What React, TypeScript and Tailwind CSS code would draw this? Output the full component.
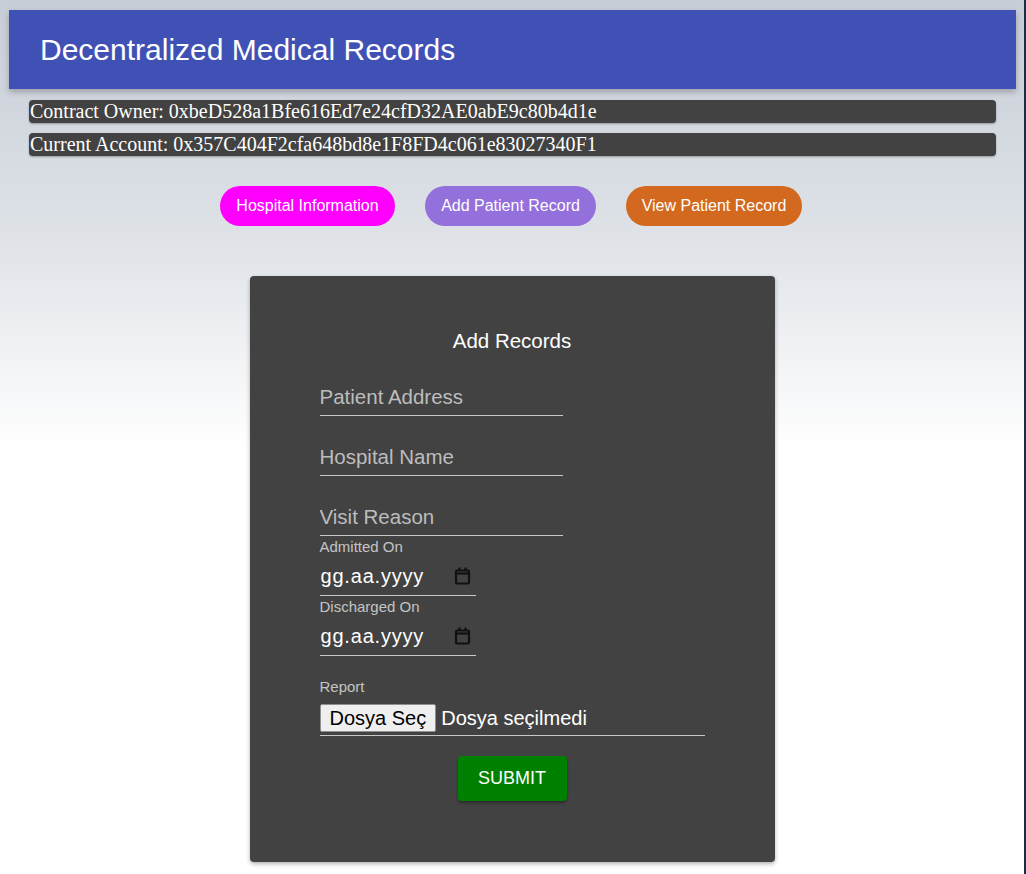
import React from 'react';

const owner = '0xbeD528a1Bfe616Ed7e24cfD32AE0abE9c80b4d1e';
const account = '0x357C404F2cfa648bd8e1F8FD4c061e83027340F1';

function CalendarIcon() {
  return (
    <svg width="17" height="18" viewBox="0 0 17 18" fill="none" stroke="#111" strokeWidth="2.2">
      <rect x="2" y="3.5" width="13" height="13" rx="1" />
      <path d="M2 6.5h13" />
      <path d="M5.5 0.5v3.5M11.5 0.5v3.5" />
    </svg>
  );
}

function TextField({ placeholder }: { placeholder: string }) {
  return (
    <input
      placeholder={placeholder}
      className="mt-5 h-10 w-[243px] bg-transparent pt-[2px] border-b border-[#c8c8c8] text-[20.5px] text-white placeholder:text-[#bdbdbd] outline-none"
    />
  );
}

function DateField({ label }: { label: string }) {
  return (
    <div className="flex flex-col">
      <span className="h-[18px] text-[15px] leading-[18px] text-[#c4c4c4]">{label}</span>
      <div className="flex h-10 w-[156px] items-center justify-between border-b border-[#c8c8c8] pr-[5px]">
        <span className="pl-[1px] text-[20px] tracking-[0.8px] text-white">gg.aa.yyyy</span>
        <CalendarIcon />
      </div>
    </div>
  );
}

export default function App() {
  return (
    <div
      className="min-h-[874px] w-full border-r-2 border-[#1b2d45] bg-[linear-gradient(to_bottom,#c7cdd7_0px,#dfe3e8_240px,#ffffff_450px,#ffffff_100%)] pt-[10px]"
      style={{ fontFamily: '"Liberation Sans", Arial, sans-serif' }}
    >
      {/* Header */}
      <header className="ml-[9px] mr-[8px] flex h-[79px] items-center bg-[#3f51b5] px-[31px] shadow-[0_3px_6px_rgba(0,0,0,0.25)]">
        <h1 className="text-[30px] text-white">Decentralized Medical Records</h1>
      </header>

      {/* Accounts */}
      <div
        className="ml-[29px] mr-[28px] mt-[11px] flex flex-col gap-[10px]"
        style={{ fontFamily: '"Liberation Serif", "Times New Roman", serif' }}
      >
        <div className="h-[23px] rounded-[4px] bg-[#424242] pl-[1px] text-[20px] leading-[23px] text-white shadow-[0_1px_2px_rgba(0,0,0,0.3)]">
          Contract Owner: {owner}
        </div>
        <div className="h-[23px] rounded-[4px] bg-[#424242] pl-[1px] text-[20px] leading-[23px] text-white shadow-[0_1px_2px_rgba(0,0,0,0.3)]">
          Current Account: {account}
        </div>
      </div>

      {/* Nav buttons */}
      <div className="mt-[30px] flex justify-center gap-[30px] pr-[2px]">
        <button className="h-10 w-[175px] rounded-full bg-[#ff00ff] text-[16px] text-white">Hospital Information</button>
        <button className="h-10 w-[171px] rounded-full bg-[#9370db] text-[16px] text-white">Add Patient Record</button>
        <button className="h-10 w-[176px] rounded-full bg-[#d2691e] text-[16px] text-white">View Patient Record</button>
      </div>

      {/* Form card */}
      <div className="mx-auto mt-[50px] h-[586px] w-[525px] rounded-[4px] bg-[#424242] pt-[51px] shadow-[0_2px_4px_rgba(0,0,0,0.3)]">
        <h2 className="text-center text-[20.5px] leading-7 text-white">Add Records</h2>
        <form className="flex flex-col pl-[70px]" onSubmit={(e) => e.preventDefault()}>
          <div className="h-px" />
          <TextField placeholder="Patient Address" />
          <TextField placeholder="Hospital Name" />
          <TextField placeholder="Visit Reason" />
          <div className="mt-[2px] flex flex-col gap-[2px]">
            <DateField label="Admitted On" />
            <DateField label="Discharged On" />
          </div>
          <span className="mt-[20px] text-[15px] leading-[21px] text-[#c4c4c4]">Report</span>
          <div className="mt-[7px] flex h-[32px] w-[385px] items-start border-b border-[#c8c8c8]">
            <span className="flex h-[28px] items-center rounded-[2px] border border-[#8f8f8f] bg-[#efefef] px-[9px] text-[20px] text-black">
              Dosya Seç
            </span>
            <span className="ml-[5px] flex h-[28px] items-center text-[20px] text-white">Dosya seçilmedi</span>
          </div>
          <div className="mt-[20px] flex justify-center pr-[70px]">
            <button
              type="submit"
              className="h-[45px] w-[109px] rounded-[4px] bg-[#008000] text-[18px] text-white shadow-[0_2px_3px_rgba(0,0,0,0.35)]"
            >
              SUBMIT
            </button>
          </div>
        </form>
      </div>
    </div>
  );
}
